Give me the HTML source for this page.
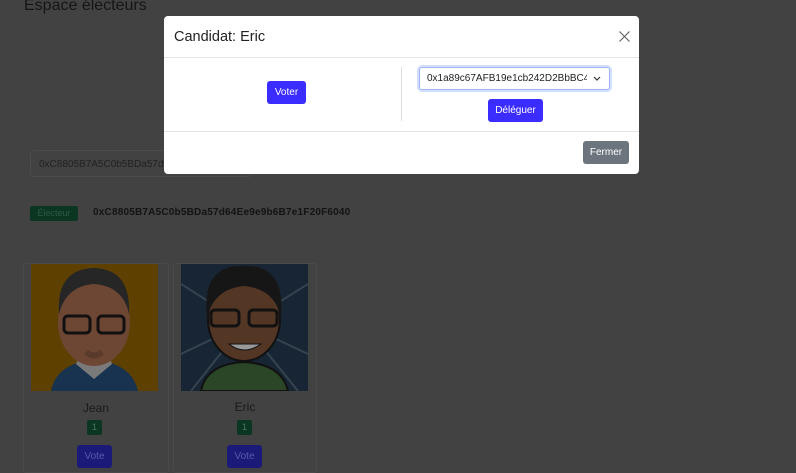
<!DOCTYPE html>
<html><head><meta charset="utf-8"><style>
*{box-sizing:border-box;margin:0;padding:0}
body{width:796px;height:468px;overflow:hidden;background:#424242;font-family:"Liberation Sans",sans-serif;position:relative}
.abs{position:absolute}
.btn{position:absolute;border-radius:3px;color:#fff;font-size:10px;display:flex;align-items:center;justify-content:center}
</style></head><body>
<div class="abs" style="left:24px;top:-3px;font-size:16px;color:#151515">Espace électeurs</div>
<div class="abs" style="left:30px;top:150px;width:222px;height:27px;border:1px solid #4c4c4c;border-radius:4px;font-size:10px;color:#222;padding:8px 0 0 8px">0xC8805B7A5C0b5BDa57d6</div>
<div class="abs" style="left:30px;top:206px;width:48px;height:15px;background:#0b3622;border-radius:2px;color:#2e5a44;font-size:9px;text-align:center;line-height:15px">Électeur</div>
<div class="abs" style="left:93px;top:207px;font-size:10px;font-weight:bold;color:#131313;letter-spacing:.2px">0xC8805B7A5C0b5BDa57d64Ee9e9b6B7e1F20F6040</div>

<div class="abs" style="left:23px;top:263px;width:146px;height:210px;border:1px solid #4a4a4a;border-radius:3px"></div>
<div class="abs" style="left:173px;top:263px;width:144px;height:210px;border:1px solid #4a4a4a;border-radius:3px"></div>

<svg class="abs" style="left:31px;top:264px" width="127" height="127" viewBox="0 0 127 127">
<rect width="127" height="127" fill="#5e4000"/>
<path d="M20 127 Q25 100 63 95 Q101 100 107 127Z" fill="#18334f"/>
<path d="M45 100 L63 115 L81 100 L78 92 L48 92Z" fill="#7a7a7a"/>
<ellipse cx="63" cy="58" rx="36" ry="44" fill="#6e4634"/>
<path d="M28 50 Q25 5 63 4 Q100 5 98 50 Q92 22 63 20 Q35 22 28 50Z" fill="#262626"/>
<rect x="33" y="52" width="26" height="17" rx="4" fill="none" stroke="#111" stroke-width="3"/>
<rect x="67" y="52" width="26" height="17" rx="4" fill="none" stroke="#111" stroke-width="3"/>
<path d="M55 88 Q63 95 71 88" stroke="#5a3a2a" stroke-width="6" fill="none"/>
</svg>
<svg class="abs" style="left:181px;top:264px" width="127" height="127" viewBox="0 0 127 127">
<rect width="127" height="127" fill="#182534"/>
<g stroke="#34444f" stroke-width="2"><path d="M63 60 L0 20M63 60 L0 90M63 60 L127 20M63 60 L127 90M63 60 L10 127M63 60 L117 127"/></g>
<path d="M20 127 Q25 100 63 98 Q101 100 107 127Z" fill="#2b4527" stroke="#111" stroke-width="2"/>
<ellipse cx="63" cy="55" rx="36" ry="42" fill="#533624" stroke="#111" stroke-width="2"/>
<path d="M26 55 Q20 0 63 2 Q105 0 100 55 Q95 25 63 22 Q32 25 26 55Z" fill="#161616"/>
<rect x="30" y="46" width="28" height="16" rx="4" fill="none" stroke="#111" stroke-width="3"/>
<rect x="68" y="46" width="28" height="16" rx="4" fill="none" stroke="#111" stroke-width="3"/>
<path d="M48 80 Q63 92 80 80Z" fill="#999" stroke="#111"/>
</svg>

<div class="abs" style="left:23px;top:401px;width:146px;text-align:center;font-size:12px;color:#1a1a1a">Jean</div>
<div class="abs" style="left:173px;top:400px;width:144px;text-align:center;font-size:12px;color:#1a1a1a">Eric</div>
<div class="abs" style="left:87px;top:420px;width:15px;height:15px;background:#0b3622;border-radius:2px;color:#4a7a5f;font-size:9px;text-align:center;line-height:15px">1</div>
<div class="abs" style="left:237px;top:420px;width:15px;height:15px;background:#0b3622;border-radius:2px;color:#4a7a5f;font-size:9px;text-align:center;line-height:15px">1</div>
<div class="btn" style="left:77px;top:445px;width:35px;height:23px;background:#1c1a78;color:#5a58a8">Vote</div>
<div class="btn" style="left:227px;top:445px;width:35px;height:23px;background:#1c1a78;color:#5a58a8">Vote</div>

<div class="abs" style="left:164px;top:16px;width:475px;height:158px;background:#fff;border-radius:4px">
 <div class="abs" style="left:10px;top:13px;font-size:14.5px;color:#222">Candidat: Eric</div>
 <svg class="abs" style="left:455px;top:15px" width="11" height="11" viewBox="0 0 11 11"><path d="M.5 .5L10.5 10.5M10.5 .5L.5 10.5" stroke="#666" stroke-width="1.2"/></svg>
 <div class="abs" style="left:0;top:41px;width:475px;border-top:1px solid #e4e4e4"></div>
 <div class="btn" style="left:103px;top:65px;width:39px;height:23px;background:#3b2cff">Voter</div>
 <div class="abs" style="left:237px;top:51px;height:54px;border-left:1px solid #ddd"></div>
 <div class="abs" style="left:255px;top:51px;width:191px;height:23px;border:1px solid #9fb6ff;box-shadow:0 0 0 2px #d3dfff;border-radius:3px;font-size:10px;color:#222;padding:5px 0 0 7px;overflow:hidden;white-space:nowrap"><span style="display:inline-block;width:160px;overflow:hidden">0x1a89c67AFB19e1cb242D2BbBC44l</span></div>
 <svg class="abs" style="left:429px;top:60px" width="8" height="5" viewBox="0 0 8 5"><path d="M1 1L4 4L7 1" stroke="#333" stroke-width="1.2" fill="none"/></svg>
 <div class="btn" style="left:324px;top:83px;width:55px;height:23px;background:#3b2cff">Déléguer</div>
 <div class="abs" style="left:0;top:115px;width:475px;border-top:1px solid #e4e4e4"></div>
 <div class="btn" style="left:419px;top:125px;width:46px;height:23px;background:#6c757d">Fermer</div>
</div>
</body></html>
